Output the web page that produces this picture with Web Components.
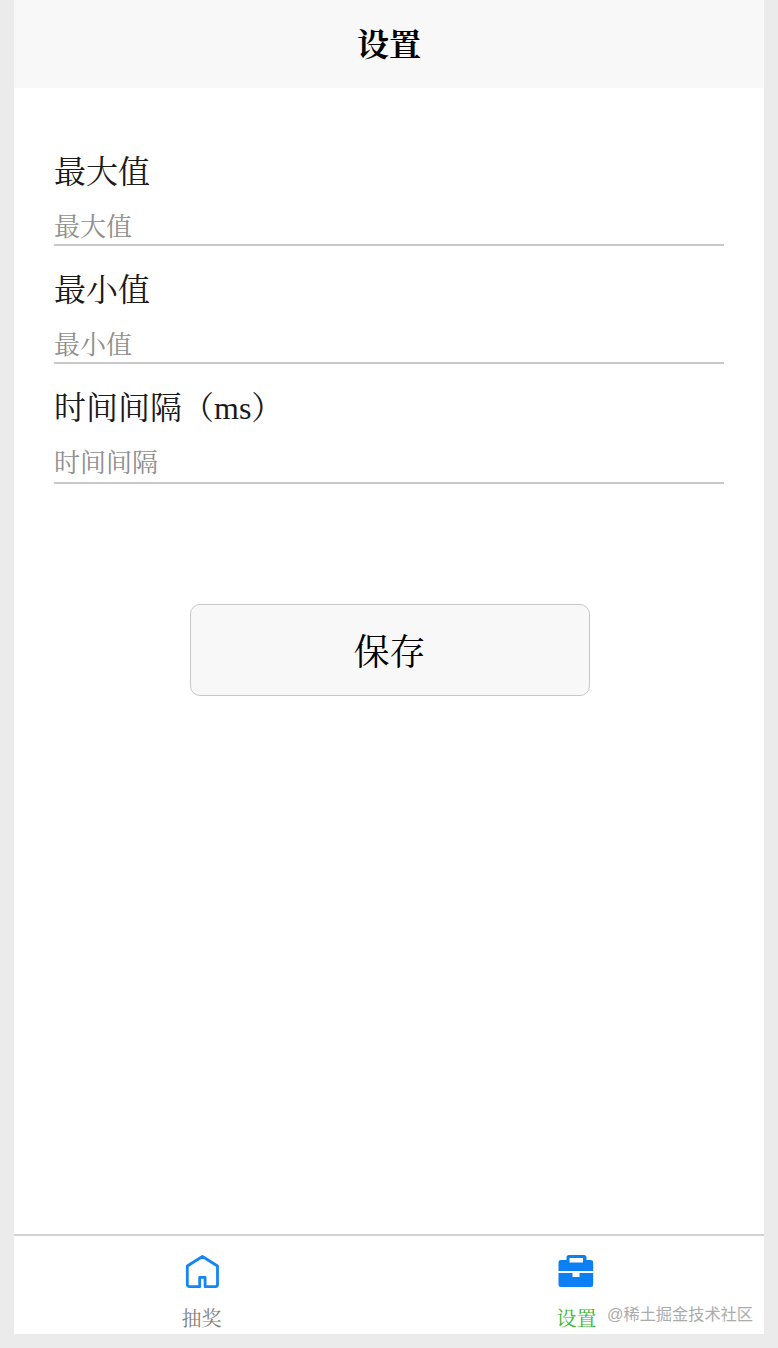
<!DOCTYPE html>
<html lang="zh">
<head>
<meta charset="utf-8">
<title>设置</title>
<style>
  html, body { margin: 0; height: 1348px; overflow: hidden; background: #ebebeb; }
  body { font-family: "Liberation Serif", "Noto Serif CJK SC", "Noto Sans CJK SC", serif; }
</style>
</head>
<body>
<settings-page>
  <nav-header>设置</nav-header>
  <form-field label="最大值" placeholder="最大值"></form-field>
  <form-field label="最小值" placeholder="最小值"></form-field>
  <form-field label="时间间隔（ms）" placeholder="时间间隔"></form-field>
  <save-button>保存</save-button>
  <tab-bar slot="footer">
    <tab-item label="抽奖" icon="home"></tab-item>
    <tab-item label="设置" icon="toolbox" active></tab-item>
  </tab-bar>
</settings-page>

<script>
class SettingsPage extends HTMLElement {
  constructor() {
    super();
    this.attachShadow({ mode: 'open' });
    this.shadowRoot.innerHTML = `
      <style>
        :host {
          display: flex;
          flex-direction: column;
          width: 750px;
          height: 1334px;
          margin: 0 14px;
          background: #fff;
          position: relative;
        }
        main { flex: 1; display: flex; flex-direction: column; }
        /* watermark sits over the tab bar */
        .mark {
          position: absolute;
          right: 11px;
          bottom: 10px;
          font-family: "Liberation Sans", "Noto Sans CJK SC", sans-serif;
          font-size: 16.2px;
          line-height: 20px;
          color: #ababab;
        }
      </style>
      <main><slot></slot></main>
      <slot name="footer"></slot>
      <div class="mark">@稀土掘金技术社区</div>
    `;
  }
}

class NavHeader extends HTMLElement {
  constructor() {
    super();
    this.attachShadow({ mode: 'open' });
    this.shadowRoot.innerHTML = `
      <style>
        :host {
          display: flex;
          align-items: center;
          justify-content: center;
          box-sizing: border-box;
          height: 88px;
          padding-bottom: 4px;
          margin-bottom: 54px;
          background: #f8f8f8;
          color: #000;
          font-size: 32px;
          font-weight: 700;
        }
      </style>
      <slot></slot>
    `;
  }
}

class FormField extends HTMLElement {
  constructor() {
    super();
    this.attachShadow({ mode: 'open' });
    this.shadowRoot.innerHTML = `
      <style>
        :host { display: block; margin: 0 40px 14px; }
        .label { font-size: 32px; line-height: 60px; color: #1a1a1a; }
        input {
          display: block;
          box-sizing: border-box;
          width: 100%;
          height: 44px;
          margin: 0;
          padding: 10px 0 0;
          border: 0;
          border-bottom: 2px solid #c8c8c8;
          outline: 0;
          background: none;
          font: inherit;
          font-size: 26px;
        }
        :host(:last-of-type) input { height: 46px; padding-bottom: 2px; }
        input::placeholder { color: #8f8f8f; opacity: 1; }
      </style>
      <div class="label"></div>
      <input type="text">
    `;
  }
  connectedCallback() {
    this.shadowRoot.querySelector('.label').textContent = this.getAttribute('label');
    this.shadowRoot.querySelector('input').placeholder = this.getAttribute('placeholder');
  }
}

class SaveButton extends HTMLElement {
  constructor() {
    super();
    this.attachShadow({ mode: 'open' });
    this.shadowRoot.innerHTML = `
      <style>
        :host {
          display: flex;
          align-items: center;
          justify-content: center;
          box-sizing: border-box;
          width: 400px;
          height: 92px;
          padding: 0 1px 2px 0;
          margin: 106px 0 0 176px;
          border: 1px solid #c8c8c8;
          border-radius: 10px;
          background: #f8f8f8;
          color: #000;
          font-size: 36px;
        }
      </style>
      <slot></slot>
    `;
  }
}

class TabBar extends HTMLElement {
  constructor() {
    super();
    this.attachShadow({ mode: 'open' });
    this.shadowRoot.innerHTML = `
      <style>
        :host {
          display: grid;
          grid-template-columns: 1fr 1fr;
          box-sizing: border-box;
          height: 100px;
          border-top: 2px solid #d2d2d2;
          background: #fff;
        }
      </style>
      <slot></slot>
    `;
  }
}

const ICONS = {
  home: `<svg width="36" height="36" viewBox="-0.4 0 36 36" fill="none" stroke="#1485f5" stroke-width="2.8" stroke-linejoin="round">
    <path d="M18 2.5 33.1 12V30.5A2.2 2.2 0 0 1 30.9 32.7H20.7V23.4H15.3V32.7H5.1A2.2 2.2 0 0 1 2.9 30.5V12Z"/>
  </svg>`,
  toolbox: `<svg width="36" height="36" viewBox="1.5 0 36 36" style="overflow:visible">
    <path fill="#0c7ff2" fill-rule="evenodd" d="M4 6H9V3.5A2.5 2.5 0 0 1 11.5 1H26.5A2.5 2.5 0 0 1 29 3.5V6H33A2.7 2.7 0 0 1 35.7 8.7V17H1V8.7A2.7 2.7 0 0 1 4 6ZM12 4V8.5H25.5V4Z"/>
    <path fill="#0c7ff2" d="M1 19H15V23H22V19H35.7V30.5A2.5 2.5 0 0 1 33.2 33H3.5A2.5 2.5 0 0 1 1 30.5Z"/>
  </svg>`
};

class TabItem extends HTMLElement {
  constructor() {
    super();
    this.attachShadow({ mode: 'open' });
    this.shadowRoot.innerHTML = `
      <style>
        :host {
          display: flex;
          flex-direction: column;
          align-items: center;
          padding-top: 18px;
          color: #808080;
          font-size: 20px;
        }
        :host([active]) { color: #3cb52e; }
        .icon { width: 36px; height: 36px; }
        .label { margin-top: 15px; line-height: 28px; }
      </style>
      <div class="icon"></div>
      <div class="label"></div>
    `;
  }
  connectedCallback() {
    this.shadowRoot.querySelector('.icon').innerHTML = ICONS[this.getAttribute('icon')];
    this.shadowRoot.querySelector('.label').textContent = this.getAttribute('label');
  }
}

customElements.define('settings-page', SettingsPage);
customElements.define('nav-header', NavHeader);
customElements.define('form-field', FormField);
customElements.define('save-button', SaveButton);
customElements.define('tab-bar', TabBar);
customElements.define('tab-item', TabItem);
</script>
</body>
</html>
